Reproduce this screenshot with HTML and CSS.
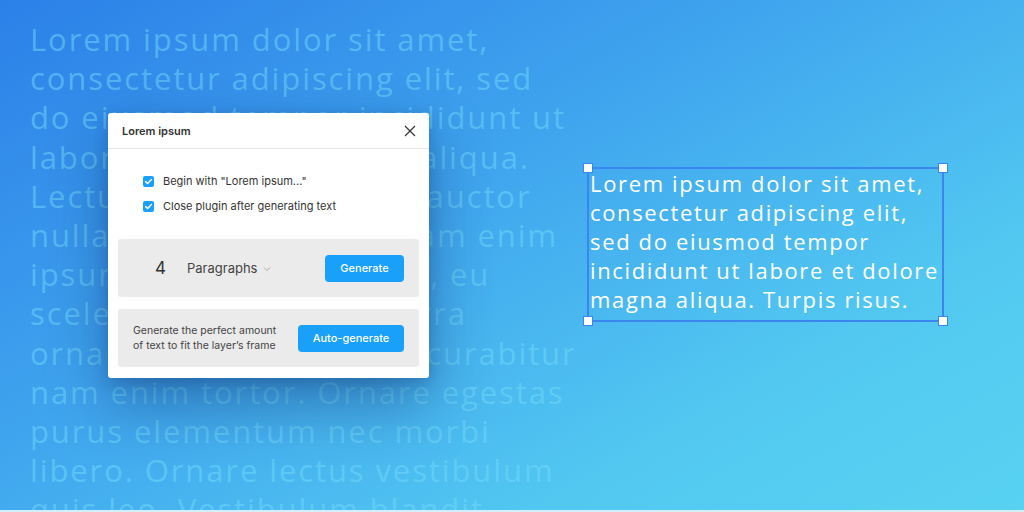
FILE: index.html
```html
<!DOCTYPE html>
<html>
<head>
<meta charset="utf-8">
<link rel="stylesheet" href="styles.css">
</head>
<body>
<div class="canvas">
  <p class="bg-text">Lorem ipsum dolor sit amet,<br>consectetur adipiscing elit, sed<br>do eiusmod tempor incididunt ut<br>labore et dolore magna aliqua.<br>Lectus arcu sit pharetra auctor<br>nulla semper rutrum quam enim<br>ipsum consequat nisl vel, eu<br>scelerisque nulla in viverra<br>ornare aenean euismod curabitur<br>nam enim tortor. Ornare egestas<br>purus elementum nec morbi<br>libero. Ornare lectus vestibulum<br>quis leo. Vestibulum blandit</p>

  <div class="dialog">
    <div class="dlg-header">
      <span class="dlg-title">Lorem ipsum</span>
      <svg class="close" width="12" height="12" viewBox="0 0 12 12"><path d="M1 1L11 11M11 1L1 11" stroke="#333" stroke-width="1.2" fill="none"/></svg>
    </div>
    <div class="dlg-body">
      <div class="options">
        <label class="opt"><span class="cb"><svg width="11" height="11" viewBox="0 0 11 11"><path d="M2.6 5.6L4.6 7.5L8.4 3.6" stroke="#fff" stroke-width="1.5" fill="none" stroke-linecap="round" stroke-linejoin="round"/></svg></span>Begin with "Lorem ipsum..."</label>
        <label class="opt"><span class="cb"><svg width="11" height="11" viewBox="0 0 11 11"><path d="M2.6 5.6L4.6 7.5L8.4 3.6" stroke="#fff" stroke-width="1.5" fill="none" stroke-linecap="round" stroke-linejoin="round"/></svg></span>Close plugin after generating text</label>
      </div>
      <div class="panel panel-count">
        <span class="count">4</span>
        <span class="unit">Paragraphs<svg class="chev" width="8" height="6" viewBox="0 0 8 6"><path d="M1 1.5L4 4.5L7 1.5" stroke="#aaa" stroke-width="1" fill="none"/></svg></span>
        <button class="btn btn-gen">Generate</button>
      </div>
      <div class="panel panel-auto">
        <span class="auto-text">Generate the perfect amount<br>of text to fit the layer’s frame</span>
        <button class="btn btn-auto">Auto-generate</button>
      </div>
    </div>
  </div>

  <div class="textbox">
    <p class="tb-text">Lorem ipsum dolor sit amet,<br>consectetur adipiscing elit,<br>sed do eiusmod tempor<br>incididunt ut labore et dolore<br>magna aliqua. Turpis risus.</p>
    <span class="handle h-tl"></span>
    <span class="handle h-tr"></span>
    <span class="handle h-bl"></span>
    <span class="handle h-br"></span>
  </div>
</div>
</body>
</html>
```
FILE: styles.css
```css
* { box-sizing: border-box; }
html, body { margin: 0; padding: 0; }
body { width: 1024px; height: 512px; overflow: hidden; }

.canvas {
  position: relative;
  width: 1024px;
  height: 512px;
  overflow: hidden;
  background: linear-gradient(150deg, #2c80e8 0%, #3fa4ee 40%, #52c8f1 75%, #58d2f1 100%);
  border-bottom: 2px solid #d2f0fb;
}

.bg-text {
  margin: 0;
  padding: 20px 0 0 30px;
  font-family: "Open Sans", sans-serif;
  font-size: 31px;
  line-height: 39.2px;
  letter-spacing: 1.9px;
  color: rgba(115, 218, 252, 0.5);
  white-space: nowrap;
}

.dialog {
  position: absolute;
  left: 108px;
  top: 113px;
  width: 321px;
  height: 265px;
  background: #fff;
  border-radius: 3px;
  box-shadow: 0 26px 60px rgba(15, 50, 110, 0.45), 0 4px 14px rgba(15, 50, 110, 0.25);
  font-family: Inter, "Liberation Sans", sans-serif;
  color: #333;
}

.dlg-header {
  height: 36px;
  border-bottom: 1px solid #e5e5e5;
  display: flex;
  align-items: center;
  justify-content: space-between;
  padding: 0 13px 0 14px;
}
.dlg-title { font-size: 11px; font-weight: 600; color: #333; }
.close { display: block; }

.dlg-body { padding: 26px 10px 11px; }

.options { display: flex; flex-direction: column; gap: 13px; padding-left: 25px; }
.opt { display: flex; align-items: center; gap: 9px; font-size: 11px; color: #333; height: 12px; }
.cb {
  width: 11px; height: 11px; border-radius: 2px; background: #18a0fb;
  display: inline-flex; align-items: center; justify-content: center;
}
.cb svg { display: block; }

.panel {
  background: #ebebeb;
  border-radius: 3px;
  height: 58px;
  display: flex;
  align-items: center;
}
.panel-count { margin-top: 27px; padding: 0 15px 0 37px; }
.panel-auto { margin-top: 12px; padding: 0 15px 0 15px; justify-content: space-between; }

.count { font-size: 17px; color: #333; width: 32px; }
.unit { font-size: 13px; color: #444; display: flex; align-items: center; gap: 6px; flex: 1; }
.chev { display: block; margin-top: 2px; }

.btn {
  border: none;
  background: #18a0fb;
  color: #fff;
  font-family: Inter, "Liberation Sans", sans-serif;
  font-size: 11px;
  font-weight: 500;
  border-radius: 4px;
  height: 27px;
  padding: 0;
}
.btn-gen { width: 79px; }
.btn-auto { width: 106px; }

.auto-text { font-size: 10.5px; line-height: 15px; color: #444; }

.textbox {
  position: absolute;
  left: 587px;
  top: 167px;
  width: 357px;
  height: 155px;
  border: 2px solid #3a86ee;
}
.tb-text {
  margin: 0;
  padding: 0 0 0 1px;
  font-family: "Open Sans", sans-serif;
  font-size: 22px;
  line-height: 29px;
  letter-spacing: 1.65px;
  color: #fff;
  white-space: nowrap;
}
.handle {
  position: absolute;
  width: 10px;
  height: 10px;
  background: #fff;
  border: 1.5px solid #3a86ee;
}
.h-tl { left: -6px; top: -6px; }
.h-tr { right: -6px; top: -6px; }
.h-bl { left: -6px; bottom: -6px; }
.h-br { right: -6px; bottom: -6px; }
```
